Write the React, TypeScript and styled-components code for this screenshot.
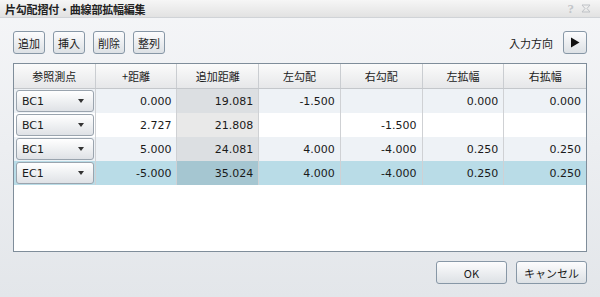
import React from 'react';
import styled, { createGlobalStyle } from 'styled-components';

const GlobalStyle = createGlobalStyle`
  html, body { margin: 0; padding: 0; }
  body {
    font-family: "Noto Sans CJK JP", "DejaVu Sans", sans-serif;
    font-size: 11px;
    color: #1a1a1a;
  }
`;

const jp = `"Noto Sans CJK JP", sans-serif`;
const num = `"DejaVu Sans", "Noto Sans CJK JP", sans-serif`;

const Window = styled.div`
  width: 600px;
  height: 297px;
  display: flex;
  flex-direction: column;
  background: linear-gradient(#f5f6f8, #e3e6ea);
  overflow: hidden;
`;

const TitleBar = styled.div`
  height: 17px;
  display: flex;
  align-items: center;
  justify-content: space-between;
  padding: 0 9px 0 5px;
  background: linear-gradient(#f6f6f6, #e2e2e2);
  border-bottom: 1px solid #d0d3d7;
`;

const Title = styled.span`
  font-family: ${jp};
  font-size: 11px;
  font-weight: 700;
  letter-spacing: -0.2px;
  color: #222;
`;

const TitleIcons = styled.div`
  display: flex;
  align-items: center;
  gap: 7px;
`;

const Help = styled.span`
  font-family: "Liberation Serif", serif;
  font-size: 13px;
  font-weight: 700;
  color: #c2c5c9;
  line-height: 1;
`;

const Body = styled.div`
  flex: 1;
  display: flex;
  flex-direction: column;
  padding: 13px 13px 13px 13px;
  gap: 9px;
`;

const Toolbar = styled.div`
  display: flex;
  align-items: center;
  gap: 8px;
  height: 23px;
`;

const Btn = styled.button<{ $w?: number }>`
  height: 23px;
  width: ${p => p.$w ?? 32}px;
  padding: 0;
  border: 1px solid #8797a6;
  border-radius: 3px;
  background: linear-gradient(#fcfcfd, #dde1e5);
  font-family: ${jp};
  font-size: 11px;
  color: #1a1a1a;
  display: flex;
  align-items: center;
  justify-content: center;
`;

const Spacer = styled.div`
  flex: 1;
`;

const DirLabel = styled.span`
  font-family: ${jp};
  font-size: 11px;
  margin-right: 2px;
`;

const Grid = styled.div`
  flex: 1;
  border: 1px solid #7f8d9a;
  background: #fff;
  display: flex;
  flex-direction: column;
`;

const HeadRow = styled.div`
  display: grid;
  grid-template-columns: repeat(7, 1fr);
  height: 24px;
  background: linear-gradient(#fbfbfb, #e6e7e9);
  border-bottom: 1px solid #c4c7cb;
`;

const HeadCell = styled.div`
  display: flex;
  align-items: center;
  justify-content: center;
  font-family: ${jp};
  font-size: 11px;
  border-right: 1px solid #cacdd1;
  &:last-child { border-right: none; }
`;

const Row = styled.div<{ $bg: string }>`
  display: grid;
  grid-template-columns: repeat(7, 1fr);
  height: 24px;
  background: ${p => p.$bg};
`;

const Cell = styled.div<{ $bg?: string }>`
  display: flex;
  align-items: center;
  justify-content: flex-end;
  padding-right: 5px;
  font-family: ${num};
  font-size: 11px;
  border-right: 1px solid #cfd1d4;
  background: ${p => p.$bg ?? 'transparent'};
  &:last-child { border-right: none; }
`;

const SelectCell = styled.div`
  display: flex;
  align-items: stretch;
  padding: 1px 1px 1px 2px;
  border-right: 1px solid #cfd1d4;
`;

const Select = styled.div`
  flex: 1;
  display: flex;
  align-items: center;
  justify-content: space-between;
  padding: 0 9px 0 5px;
  border: 1px solid #9aa4ae;
  border-radius: 3px;
  background: linear-gradient(#ffffff, #dfe2e6);
  font-family: ${num};
  font-size: 11px;
`;

const Caret = styled.span`
  width: 0;
  height: 0;
  border-left: 3.5px solid transparent;
  border-right: 3.5px solid transparent;
  border-top: 4px solid #333;
`;

const Footer = styled.div`
  display: flex;
  justify-content: flex-end;
  gap: 9px;
`;

const headers = ['参照測点', '+距離', '追加距離', '左勾配', '右勾配', '左拡幅', '右拡幅'];

type Rec = { pt: string; vals: string[]; sel?: boolean };

const rows: Rec[] = [
  { pt: 'BC1', vals: ['0.000', '19.081', '-1.500', '', '0.000', '0.000'] },
  { pt: 'BC1', vals: ['2.727', '21.808', '', '-1.500', '', ''] },
  { pt: 'BC1', vals: ['5.000', '24.081', '4.000', '-4.000', '0.250', '0.250'] },
  { pt: 'EC1', vals: ['-5.000', '35.024', '4.000', '-4.000', '0.250', '0.250'], sel: true },
];

const rowBg = (i: number, sel?: boolean) => (sel ? '#b9dce7' : i % 2 === 0 ? '#eef2f6' : '#ffffff');
const addBg = (i: number, sel?: boolean) => (sel ? '#a5c6d1' : i % 2 === 0 ? '#dcdfe2' : '#e9e9e9');

export default function App() {
  return (
    <>
      <GlobalStyle />
      <Window>
        <TitleBar>
          <Title>片勾配摺付・曲線部拡幅編集</Title>
          <TitleIcons>
            <Help>?</Help>
            <svg width="10" height="9" viewBox="0 0 10 9">
              <path d="M1 1 L4 4.5 L1 8 M9 1 L6 4.5 L9 8 M1 1 L9 1 M1 8 L9 8" fill="none" stroke="#bfc2c6" strokeWidth="1" />
            </svg>
          </TitleIcons>
        </TitleBar>
        <Body>
          <Toolbar>
            <Btn>追加</Btn>
            <Btn>挿入</Btn>
            <Btn>削除</Btn>
            <Btn>整列</Btn>
            <Spacer />
            <DirLabel>入力方向</DirLabel>
            <Btn $w={24}>
              <svg width="10" height="11" viewBox="0 0 10 11">
                <path d="M1 0.5 L9.5 5.5 L1 10.5 Z" fill="#111" />
              </svg>
            </Btn>
          </Toolbar>
          <Grid>
            <HeadRow>
              {headers.map(h => <HeadCell key={h}>{h}</HeadCell>)}
            </HeadRow>
            {rows.map((r, i) => (
              <Row key={i} $bg={rowBg(i, r.sel)}>
                <SelectCell>
                  <Select>
                    <span>{r.pt}</span>
                    <Caret />
                  </Select>
                </SelectCell>
                {r.vals.map((v, j) => (
                  <Cell key={j} $bg={j === 1 ? addBg(i, r.sel) : undefined}>{v}</Cell>
                ))}
              </Row>
            ))}
          </Grid>
          <Footer>
            <Btn $w={71}>OK</Btn>
            <Btn $w={71}>キャンセル</Btn>
          </Footer>
        </Body>
      </Window>
    </>
  );
}
